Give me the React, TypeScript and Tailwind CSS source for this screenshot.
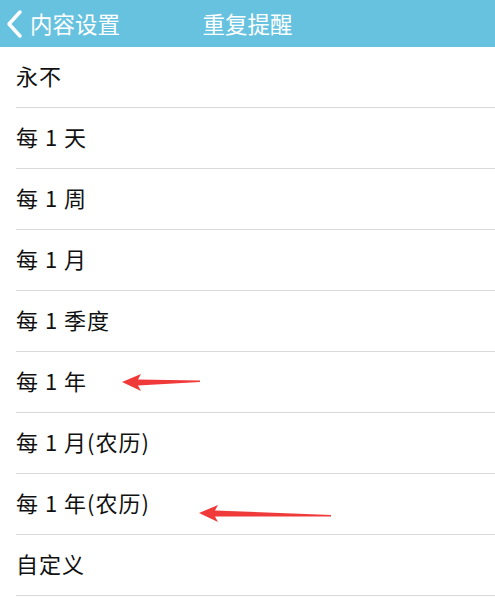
import React from "react";

const items = [
  "永不",
  "每 1 天",
  "每 1 周",
  "每 1 月",
  "每 1 季度",
  "每 1 年",
  "每 1 月(农历)",
  "每 1 年(农历)",
  "自定义",
];

function Arrow({ width, tilt }: { width: number; tilt: number }) {
  return (
    <svg width={width} height="24" viewBox={`0 0 ${width} 24`} className="absolute">
      <polygon
        points={`0,10 19,2 16,7.5 ${width},${9 + tilt} ${width},${10.5 + tilt} 16,13.5 19,19`}
        fill="#f03a3a"
      />
    </svg>
  );
}

export default function App() {
  return (
    <div
      className="w-[495px] h-[608px] bg-white overflow-hidden"
      style={{ fontFamily: '"Noto Sans CJK SC", "Noto Sans", sans-serif' }}
    >
      <div className="relative h-[47px] bg-[#67c2e0] flex items-center text-white">
        <div className="flex items-center pl-[5px]">
          <svg width="20" height="30" viewBox="0 0 20 30">
            <polyline
              points="15,3 4,15 15,27"
              fill="none"
              stroke="white"
              strokeWidth="3.5"
              strokeLinecap="round"
              strokeLinejoin="round"
            />
          </svg>
          <span className="ml-[5px] text-[22.5px] leading-none">内容设置</span>
        </div>
        <div className="absolute left-0 right-0 text-center text-[22.5px] leading-none pointer-events-none">
          重复提醒
        </div>
      </div>
      <div>
        {items.map((t, i) => (
          <div key={i} className="pl-[16px]">
            <div className="relative h-[61px] border-b border-[#d9d9d9] flex items-center pb-[3px] text-[22px] text-[#111] tracking-[1px]">
              {t}
              {i === 5 && (
                <div className="absolute left-[106px] top-[20px]">
                  <Arrow width={78} tilt={-0.5} />
                </div>
              )}
              {i === 7 && (
                <div className="absolute left-[183px] top-[29px]">
                  <Arrow width={132} tilt={3} />
                </div>
              )}
            </div>
          </div>
        ))}
      </div>
    </div>
  );
}
